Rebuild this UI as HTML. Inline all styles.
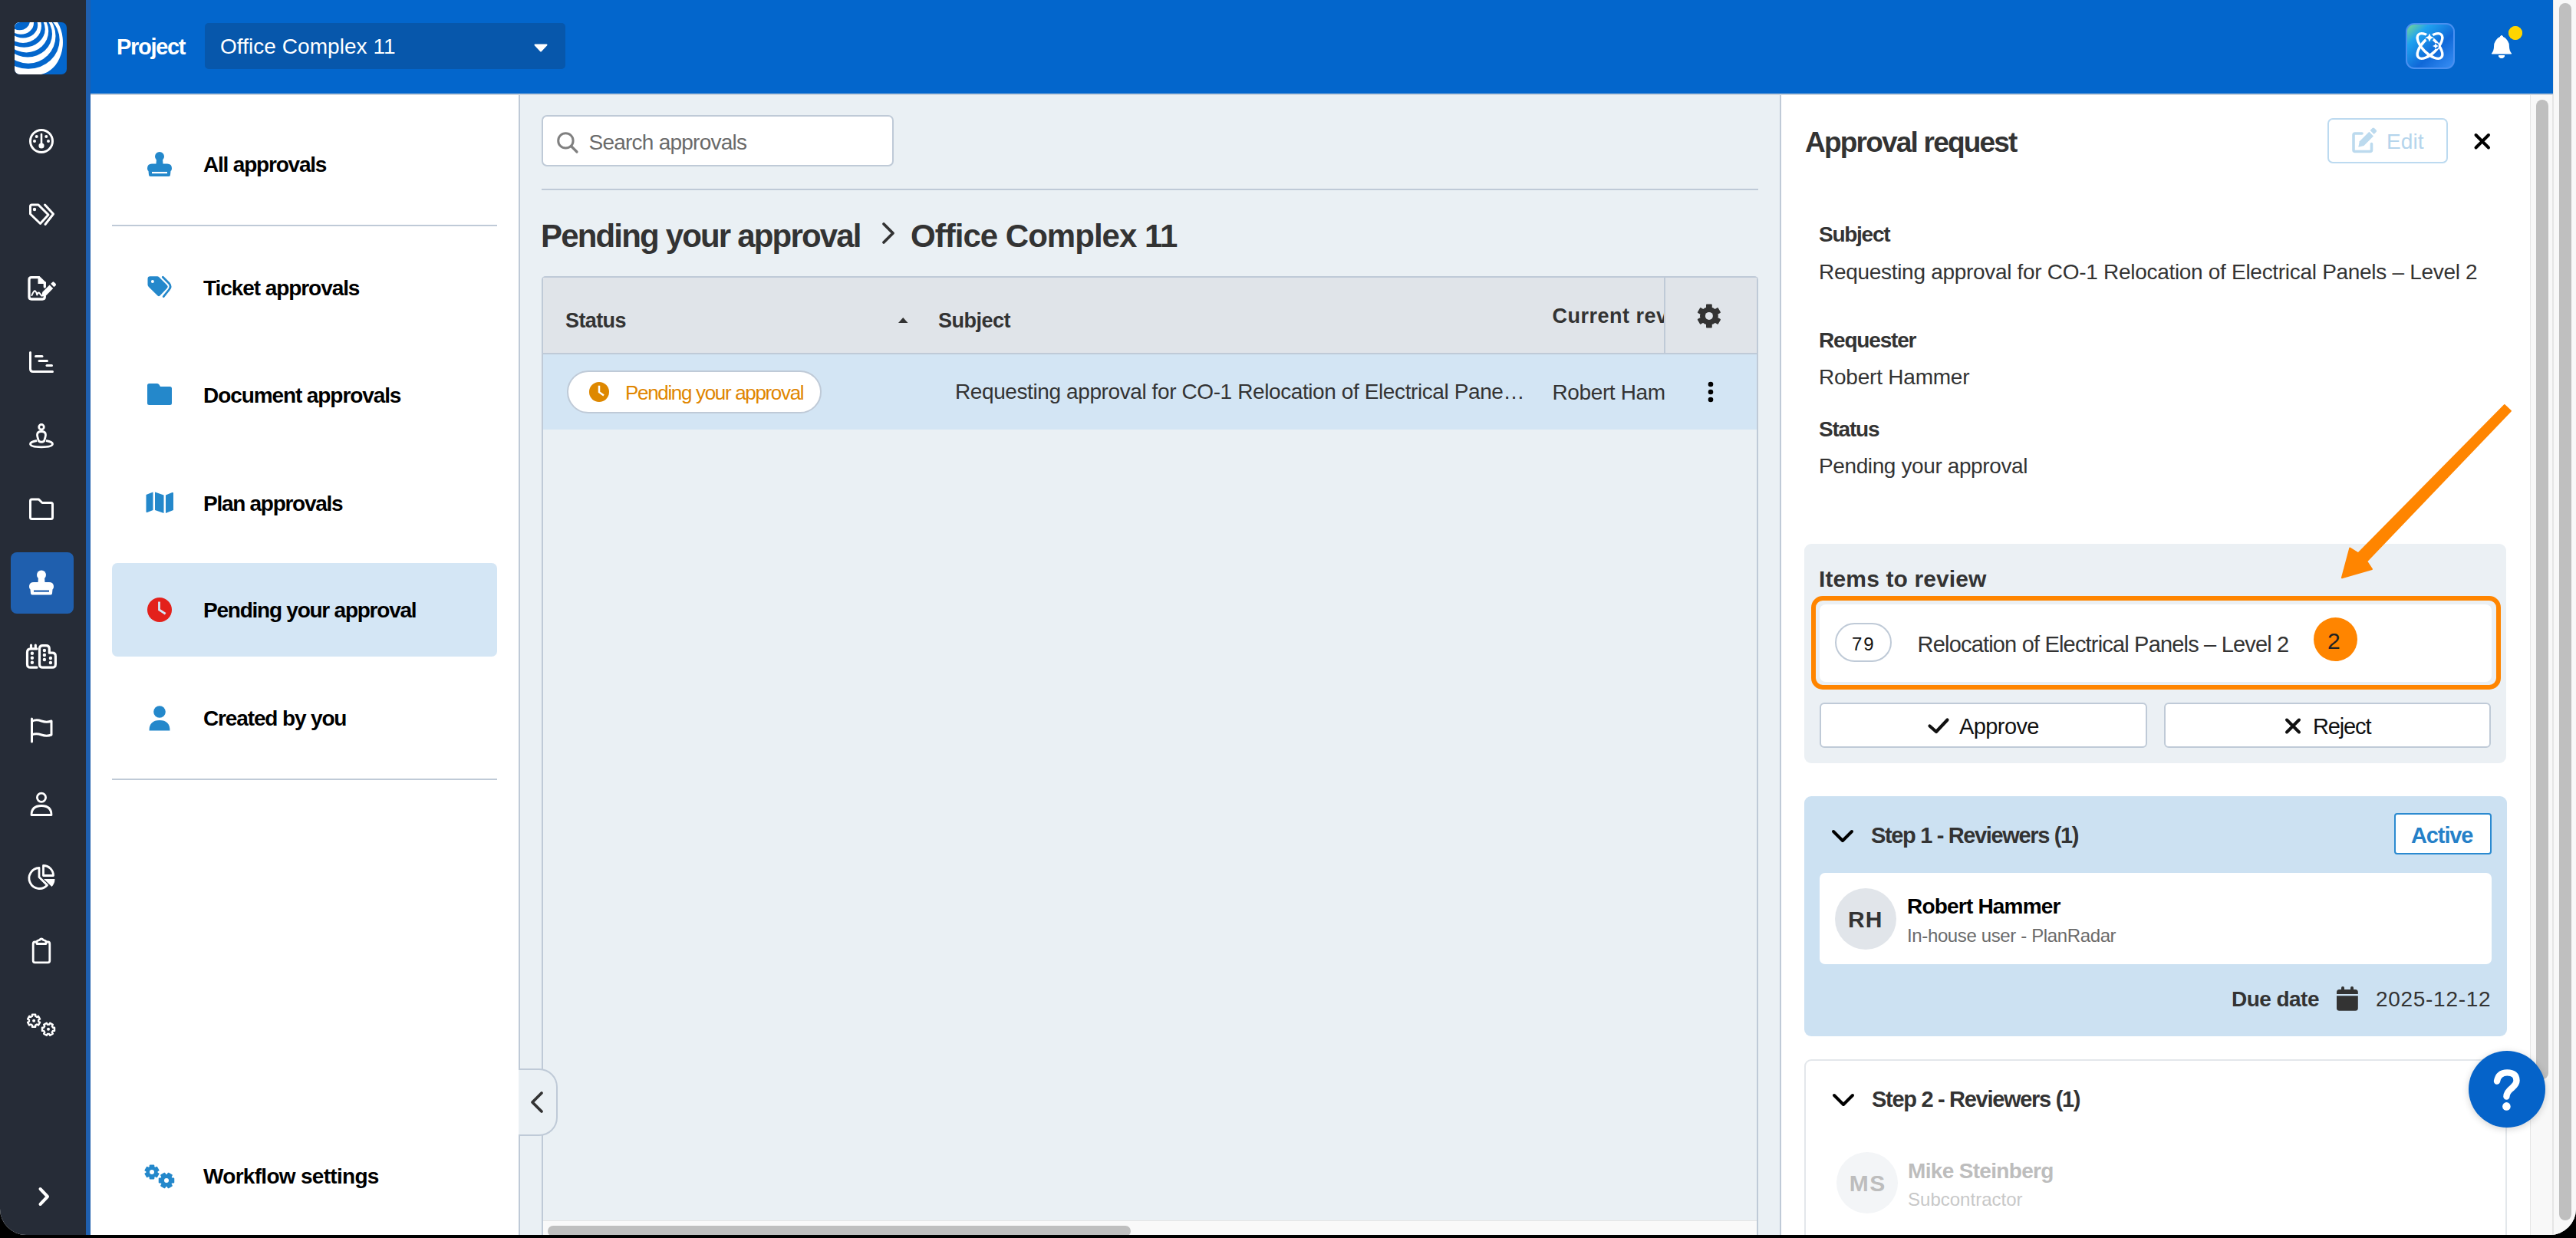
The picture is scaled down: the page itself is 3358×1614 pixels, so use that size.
<!DOCTYPE html>
<html><head><meta charset="utf-8"><title>Approvals</title>
<style>
html,body{margin:0;padding:0;width:3358px;height:1614px;overflow:hidden;background:#000;}
#app{position:absolute;left:0;top:0;width:3358px;height:1610px;overflow:hidden;background:#fff;border-bottom-left-radius:34px;border-bottom-right-radius:34px;font-family:'Liberation Sans',sans-serif;}
</style></head><body><div id="app">
<div style="position:absolute;left:0px;top:0px;width:112px;height:1610px;background:#262c37"></div>
<div style="position:absolute;left:112px;top:0px;width:6px;height:1610px;background:#1f5fae"></div>
<div style="position:absolute;left:14px;top:720px;width:82px;height:80px;background:#1f5fae;border-radius:8px"></div>
<div style="position:absolute;left:118px;top:0px;width:3210px;height:122px;background:#0366cc"></div>
<div style="position:absolute;left:118px;top:122px;width:3210px;height:2px;background:#c9d2dc"></div>
<div style="position:absolute;left:152.0px;top:46.5px;white-space:pre;font:700 29px/29px 'Liberation Sans',sans-serif;color:#fff;letter-spacing:-1.30px;">Project</div>
<div style="position:absolute;left:267px;top:30px;width:470px;height:60px;background:#0757ab;border-radius:5px"></div>
<div style="position:absolute;left:287.0px;top:47.3px;white-space:pre;font:400 28px/28px 'Liberation Sans',sans-serif;color:#fff;letter-spacing:0.05px;">Office Complex 11</div>
<svg style="position:absolute;left:696px;top:57px;" width="18" height="11" viewBox="0 0 18 11"><path d="M1.5 1.5 H16.5 L9 9.5 Z" fill="#fff" stroke="#fff" stroke-width="2" stroke-linejoin="round"/></svg>
<svg style="position:absolute;left:3136px;top:30px;" width="64" height="60" viewBox="0 0 64 60"><defs><linearGradient id="aig" x1="0" y1="0" x2="1" y2="1">
<stop offset="0" stop-color="#7fdc8a"/><stop offset="0.25" stop-color="#1fa3f0"/><stop offset="0.6" stop-color="#0f68d8"/><stop offset="1" stop-color="#3a90f5"/></linearGradient></defs>
<rect x="1" y="1" width="62" height="58" rx="10" fill="url(#aig)" stroke="#4a90f0" stroke-width="2"/></svg>
<svg style="position:absolute;left:3246px;top:44px;" width="30" height="34" viewBox="0 0 30 34"><path d="M15 2 C16 2 16.5 3 16.5 4 C21 5 23 9 23 14 L23 21 L27 26 L3 26 L7 21 L7 14 C7 9 9 5 13.5 4 C13.5 3 14 2 15 2 Z" fill="#fff"/><path d="M11 28 H19 C19 30.5 17 32 15 32 C13 32 11 30.5 11 28 Z" fill="#fff"/></svg>
<div style="position:absolute;left:3270px;top:34px;width:18px;height:18px;border-radius:50%;background:#ffd500"></div>
<div style="position:absolute;left:3328px;top:0px;width:30px;height:1610px;background:#f8f8f8;border-left:1px solid #e6e6e6;box-sizing:border-box"></div>
<div style="position:absolute;left:3336px;top:4px;width:16px;height:1587px;background:#bfbfbf;border-radius:8px"></div>
<div style="position:absolute;left:118px;top:124px;width:558px;height:1486px;background:#fff"></div>
<div style="position:absolute;left:676px;top:124px;width:2px;height:1486px;background:#bfcad7"></div>
<div style="position:absolute;left:146px;top:293px;width:502px;height:2px;background:#bfcad7"></div>
<div style="position:absolute;left:146px;top:734px;width:502px;height:122px;background:#d4e6f5;border-radius:7px"></div>
<div style="position:absolute;left:146px;top:1015px;width:502px;height:2px;background:#bfcad7"></div>
<div style="position:absolute;left:265.0px;top:201.3px;white-space:pre;font:700 28px/28px 'Liberation Sans',sans-serif;color:#000;letter-spacing:-1.20px;">All approvals</div>
<div style="position:absolute;left:265.0px;top:361.9px;white-space:pre;font:700 28px/28px 'Liberation Sans',sans-serif;color:#000;letter-spacing:-1.07px;">Ticket approvals</div>
<div style="position:absolute;left:265.0px;top:501.7px;white-space:pre;font:700 28px/28px 'Liberation Sans',sans-serif;color:#000;letter-spacing:-1.09px;">Document approvals</div>
<div style="position:absolute;left:265.0px;top:643.3px;white-space:pre;font:700 28px/28px 'Liberation Sans',sans-serif;color:#000;letter-spacing:-1.28px;">Plan approvals</div>
<div style="position:absolute;left:265.0px;top:782.3px;white-space:pre;font:700 28px/28px 'Liberation Sans',sans-serif;color:#000;letter-spacing:-1.24px;">Pending your approval</div>
<div style="position:absolute;left:265.0px;top:923.3px;white-space:pre;font:700 28px/28px 'Liberation Sans',sans-serif;color:#000;letter-spacing:-1.14px;">Created by you</div>
<div style="position:absolute;left:265.0px;top:1520.3px;white-space:pre;font:700 28px/28px 'Liberation Sans',sans-serif;color:#000;letter-spacing:-0.70px;">Workflow settings</div>
<div style="position:absolute;left:678px;top:124px;width:1642px;height:1486px;background:#eaf0f4"></div>
<div style="position:absolute;left:706px;top:150px;width:459px;height:67px;background:#fff;border:2px solid #bfcad7;border-radius:7px;box-sizing:border-box"></div>
<div style="position:absolute;left:767.5px;top:171.7px;white-space:pre;font:400 28px/28px 'Liberation Sans',sans-serif;color:#6a6a6a;letter-spacing:-0.76px;">Search approvals</div>
<div style="position:absolute;left:706px;top:246px;width:1586px;height:2px;background:#bfcad7"></div>
<div style="position:absolute;left:705.0px;top:286.5px;white-space:pre;font:700 42px/42px 'Liberation Sans',sans-serif;color:#333333;letter-spacing:-1.83px;">Pending your approval</div>
<div style="position:absolute;left:1187.0px;top:286.5px;white-space:pre;font:700 42px/42px 'Liberation Sans',sans-serif;color:#333333;letter-spacing:-0.98px;">Office Complex 11</div>
<div style="position:absolute;left:706px;top:360px;width:1586px;height:1250px;border:2px solid #bfcad7;border-bottom:none;border-radius:5px 5px 0 0;box-sizing:border-box;background:#eaf0f4"></div>
<div style="position:absolute;left:708px;top:362px;width:1582px;height:98px;background:#e0e4e9"></div>
<div style="position:absolute;left:708px;top:460px;width:1582px;height:2px;background:#bfcad7"></div>
<div style="position:absolute;left:2169px;top:362px;width:2px;height:98px;background:#bfcad7"></div>
<div style="position:absolute;left:708px;top:462px;width:1582px;height:98px;background:#d3e5f4"></div>
<div style="position:absolute;left:737.0px;top:405.2px;white-space:pre;font:700 27px/27px 'Liberation Sans',sans-serif;color:#333333;letter-spacing:-0.61px;">Status</div>
<div style="position:absolute;left:1223.0px;top:405.2px;white-space:pre;font:700 27px/27px 'Liberation Sans',sans-serif;color:#333333;letter-spacing:-0.51px;">Subject</div>
<div style="position:absolute;left:2023.5px;top:399.2px;white-space:pre;font:700 27px/27px 'Liberation Sans',sans-serif;color:#333333;letter-spacing:0.50px;width:145.5px;overflow:hidden;">Current rev</div>
<div style="position:absolute;left:739px;top:483px;width:332px;height:56px;background:#fff;border:2px solid #bfcad7;border-radius:28px;box-sizing:border-box"></div>
<div style="position:absolute;left:815.0px;top:499.0px;white-space:pre;font:400 26px/26px 'Liberation Sans',sans-serif;color:#e08600;letter-spacing:-1.33px;">Pending your approval</div>
<div style="position:absolute;left:1245.0px;top:497.3px;white-space:pre;font:400 28px/28px 'Liberation Sans',sans-serif;color:#333333;letter-spacing:-0.40px;">Requesting approval for CO-1 Relocation of Electrical Pane…</div>
<div style="position:absolute;left:2023.5px;top:498.3px;white-space:pre;font:400 28px/28px 'Liberation Sans',sans-serif;color:#333333;letter-spacing:-0.38px;">Robert Ham</div>
<div style="position:absolute;left:708px;top:1591px;width:1582px;height:19px;background:#f9f9f9;border-top:1px solid #e4e4e4;box-sizing:border-box"></div>
<div style="position:absolute;left:714px;top:1598px;width:760px;height:14px;background:#bfbfbf;border-radius:7px"></div>
<div style="position:absolute;left:676px;top:1393px;width:51px;height:88px;background:#eaf0f4;border:2px solid #bfcad7;border-left:none;border-radius:0 24px 24px 0;box-sizing:border-box"></div>
<div style="position:absolute;left:2320px;top:124px;width:978px;height:1486px;background:#fff"></div>
<div style="position:absolute;left:2320px;top:124px;width:2px;height:1486px;background:#bfcad7"></div>
<div style="position:absolute;left:3298px;top:124px;width:30px;height:1486px;background:#f8f8f8;border-left:1px solid #e6e6e6;border-right:1px solid #e6e6e6;box-sizing:border-box"></div>
<div style="position:absolute;left:3306px;top:130px;width:16px;height:1277px;background:#bfbfbf;border-radius:8px"></div>
<div style="position:absolute;left:2353.0px;top:167.2px;white-space:pre;font:700 37px/37px 'Liberation Sans',sans-serif;color:#333333;letter-spacing:-1.79px;">Approval request</div>
<div style="position:absolute;left:3034px;top:154px;width:157px;height:59px;border:2px solid #bcdaf0;border-radius:7px;box-sizing:border-box"></div>
<div style="position:absolute;left:3111.0px;top:171.3px;white-space:pre;font:400 28px/28px 'Liberation Sans',sans-serif;color:#b5d5ec;letter-spacing:0.08px;">Edit</div>
<div style="position:absolute;left:2371.0px;top:292.3px;white-space:pre;font:700 28px/28px 'Liberation Sans',sans-serif;color:#333333;letter-spacing:-1.27px;">Subject</div>
<div style="position:absolute;left:2371.0px;top:341.3px;white-space:pre;font:400 28px/28px 'Liberation Sans',sans-serif;color:#333333;letter-spacing:-0.30px;">Requesting approval for CO-1 Relocation of Electrical Panels – Level 2</div>
<div style="position:absolute;left:2371.0px;top:429.9px;white-space:pre;font:700 28px/28px 'Liberation Sans',sans-serif;color:#333333;letter-spacing:-1.18px;">Requester</div>
<div style="position:absolute;left:2371.0px;top:478.3px;white-space:pre;font:400 28px/28px 'Liberation Sans',sans-serif;color:#333333;letter-spacing:-0.22px;">Robert Hammer</div>
<div style="position:absolute;left:2371.0px;top:546.3px;white-space:pre;font:700 28px/28px 'Liberation Sans',sans-serif;color:#333333;letter-spacing:-1.22px;">Status</div>
<div style="position:absolute;left:2371.0px;top:594.3px;white-space:pre;font:400 28px/28px 'Liberation Sans',sans-serif;color:#333333;letter-spacing:-0.39px;">Pending your approval</div>
<div style="position:absolute;left:2352px;top:709px;width:915px;height:286px;background:#ebf0f4;border-radius:9px"></div>
<div style="position:absolute;left:2371.0px;top:739.6px;white-space:pre;font:700 30px/30px 'Liberation Sans',sans-serif;color:#333333;letter-spacing:0.12px;">Items to review</div>
<div style="position:absolute;left:2372px;top:787.5px;width:876px;height:101.0px;background:#fff;border-radius:8px"></div>
<div style="position:absolute;left:2360.5px;top:777px;width:899px;height:122px;border:6px solid #ff8500;border-radius:15px;box-sizing:border-box"></div>
<div style="position:absolute;left:2392px;top:812px;width:74px;height:51px;border:2px solid #bfcad7;border-radius:26px;box-sizing:border-box"></div>
<div style="position:absolute;left:2414.0px;top:827.7px;white-space:pre;font:400 24px/24px 'Liberation Sans',sans-serif;color:#111;letter-spacing:1.80px;">79</div>
<div style="position:absolute;left:2499.6px;top:825.5px;white-space:pre;font:400 29px/29px 'Liberation Sans',sans-serif;color:#333333;letter-spacing:-0.82px;">Relocation of Electrical Panels – Level 2</div>
<div style="position:absolute;left:3016px;top:805px;width:57px;height:57px;border-radius:50%;background:#ff8500"></div>
<div style="position:absolute;left:3034.0px;top:820.6px;white-space:pre;font:400 30px/30px 'Liberation Sans',sans-serif;color:#222;letter-spacing:0.00px;">2</div>
<div style="position:absolute;left:2372px;top:916px;width:427px;height:59px;background:#fff;border:2px solid #bfcad7;border-radius:6px;box-sizing:border-box"></div>
<div style="position:absolute;left:2821px;top:916px;width:426px;height:59px;background:#fff;border:2px solid #bfcad7;border-radius:6px;box-sizing:border-box"></div>
<div style="position:absolute;left:2554.0px;top:932.5px;white-space:pre;font:400 29px/29px 'Liberation Sans',sans-serif;color:#111;letter-spacing:-0.59px;">Approve</div>
<div style="position:absolute;left:3015.0px;top:932.5px;white-space:pre;font:400 29px/29px 'Liberation Sans',sans-serif;color:#111;letter-spacing:-1.14px;">Reject</div>
<svg style="position:absolute;left:0;top:0" width="3358" height="1614"><path d="M3264.7 528.1 L3272.9 535.7 L3085.2 731.7 L3092 742 L3052.9 753.3 L3063.3 714.6 L3074.2 721.3 Z" fill="#ff8500" stroke="#ff8500" stroke-width="2" stroke-linejoin="round"/></svg>
<div style="position:absolute;left:2352px;top:1038px;width:916px;height:313px;background:#cce1f2;border-radius:9px"></div>
<div style="position:absolute;left:2439.0px;top:1074.5px;white-space:pre;font:700 29px/29px 'Liberation Sans',sans-serif;color:#333333;letter-spacing:-1.35px;">Step 1 - Reviewers (1)</div>
<div style="position:absolute;left:3121px;top:1060px;width:127px;height:54px;background:#fff;border:2px solid #2b8ad0;border-radius:4px;box-sizing:border-box"></div>
<div style="position:absolute;left:3143.0px;top:1074.5px;white-space:pre;font:700 29px/29px 'Liberation Sans',sans-serif;color:#2580c8;letter-spacing:-1.11px;">Active</div>
<div style="position:absolute;left:2372px;top:1138px;width:876px;height:119px;background:#fff;border-radius:7px"></div>
<div style="position:absolute;left:2392px;top:1158px;width:80px;height:80px;border-radius:50%;background:#e1e5ea"></div>
<div style="position:absolute;left:2409.0px;top:1184.2px;white-space:pre;font:700 30px/30px 'Liberation Sans',sans-serif;color:#333333;letter-spacing:1.16px;">RH</div>
<div style="position:absolute;left:2486.0px;top:1168.3px;white-space:pre;font:700 28px/28px 'Liberation Sans',sans-serif;color:#000;letter-spacing:-0.80px;">Robert Hammer</div>
<div style="position:absolute;left:2486.0px;top:1207.7px;white-space:pre;font:400 24px/24px 'Liberation Sans',sans-serif;color:#6b6b6b;letter-spacing:-0.37px;">In-house user - PlanRadar</div>
<div style="position:absolute;left:2909.0px;top:1289.3px;white-space:pre;font:700 28px/28px 'Liberation Sans',sans-serif;color:#333333;letter-spacing:-0.54px;">Due date</div>
<div style="position:absolute;left:3097.0px;top:1289.3px;white-space:pre;font:400 28px/28px 'Liberation Sans',sans-serif;color:#333333;letter-spacing:0.70px;">2025-12-12</div>
<div style="position:absolute;left:2352px;top:1381px;width:916px;height:300px;border:2px solid #e3e7eb;border-radius:9px;box-sizing:border-box;background:#fff"></div>
<div style="position:absolute;left:2440.0px;top:1418.5px;white-space:pre;font:700 29px/29px 'Liberation Sans',sans-serif;color:#333333;letter-spacing:-1.30px;">Step 2 - Reviewers (1)</div>
<div style="position:absolute;left:2394px;top:1502px;width:80px;height:80px;border-radius:50%;background:#f3f5f7"></div>
<div style="position:absolute;left:2410.7px;top:1528.2px;white-space:pre;font:700 30px/30px 'Liberation Sans',sans-serif;color:#bdbdbd;letter-spacing:1.50px;">MS</div>
<div style="position:absolute;left:2487.0px;top:1513.3px;white-space:pre;font:700 28px/28px 'Liberation Sans',sans-serif;color:#bdbdbd;letter-spacing:-0.67px;">Mike Steinberg</div>
<div style="position:absolute;left:2487.0px;top:1551.7px;white-space:pre;font:400 24px/24px 'Liberation Sans',sans-serif;color:#c8c8c8;letter-spacing:0.01px;">Subcontractor</div>
<div style="position:absolute;left:3218px;top:1370px;width:100px;height:100px;border-radius:50%;background:#0563c9;box-shadow:0 2px 10px rgba(0,0,0,0.18)"></div>
<svg style="position:absolute;left:0;top:0" width="3358" height="1614" viewBox="0 0 3358 1614"><defs><clipPath id="lgc"><rect x="19" y="29" width="68" height="68" rx="7"/></clipPath></defs>
<g clip-path="url(#lgc)"><rect x="19" y="29" width="68" height="68" fill="#0366cc"/>
<g transform="translate(19,29)">
<path d="M56 0 A33.4 42.5 0 0 1 34.5 68 L-2 68 L-2 -2 L56 -2 Z" fill="#fff"/>
<ellipse cx="17.9" cy="23.1" rx="40.8" ry="37.7" fill="#0366cc"/>
<ellipse cx="17.9" cy="17.9" rx="35.6" ry="35.9" fill="#fff"/>
<ellipse cx="17" cy="15.4" rx="32" ry="30.1" fill="#0366cc"/>
<ellipse cx="15.4" cy="11.5" rx="28.8" ry="28" fill="#fff"/>
<ellipse cx="12.4" cy="9" rx="27.4" ry="23.7" fill="#0366cc"/>
<ellipse cx="11" cy="5" rx="24" ry="21.9" fill="#fff"/>
<ellipse cx="11" cy="4" rx="19.2" ry="16.6" fill="#0366cc"/>
<ellipse cx="8" cy="1" rx="17" ry="14.8" fill="#fff"/>
<ellipse cx="6.6" cy="-2" rx="13.4" ry="12.2" fill="#0366cc"/>
</g></g>
<g fill="none" stroke="#ffffff" stroke-width="3"><circle cx="54" cy="184" r="14.5"/></g>
<line x1="54" y1="175" x2="54" y2="189" stroke="#ffffff" stroke-width="2.6" stroke-linecap="round"/>
<circle cx="54" cy="190" r="3.6" fill="#ffffff"/>
<circle cx="47.7" cy="178" r="2" fill="#ffffff"/><circle cx="60.3" cy="178" r="2" fill="#ffffff"/>
<circle cx="45" cy="184" r="2" fill="#ffffff"/><circle cx="63" cy="184" r="2" fill="#ffffff"/>
<g fill="none" stroke="#ffffff" stroke-width="3" stroke-linejoin="round" stroke-linecap="round">
<path d="M39.5 269 Q39.5 267 41.5 267 L50 267 L63 280 L52.5 291.5 L39.5 279 Z"/>
<path d="M58.5 267 L69.5 279 L59 292.5"/></g>
<circle cx="45" cy="273" r="2.2" fill="#ffffff"/>
<g fill="none" stroke="#ffffff" stroke-width="3.3" stroke-linejoin="round" stroke-linecap="round">
<path d="M58.3 374 L58.3 368.6 M50.2 361.7 L41 361.7 Q38 361.7 38 364.7 L38 387 Q38 390 41 390 L55.3 390 Q58.3 390 58.3 387 L58.3 386"/></g>
<path d="M49.5 360 L51.5 360 L60 368.3 L60 370 L49.5 370 Z" fill="#ffffff"/>
<path d="M41.5 385 Q44 378.5 46 379.5 Q47.5 380.5 48.3 384.5 Q49.5 381 50.8 381.5 Q52 382.5 54 385.5" fill="none" stroke="#ffffff" stroke-width="2" stroke-linecap="round" stroke-linejoin="round"/>
<path d="M54.2 386.8 L55.3 380.8 L64.6 371.5 L69.2 376.1 L59.9 385.4 Z" fill="#ffffff"/>
<path d="M66.1 370 L68.2 367.9 Q69.4 366.7 70.6 367.9 L72.5 369.8 Q73.7 371 72.5 372.2 L70.4 374.3 Z" fill="#ffffff"/>
<g fill="none" stroke="#ffffff" stroke-width="3" stroke-linecap="round" stroke-linejoin="round">
<path d="M39.5 459.5 L39.5 481 Q39.5 484.5 43 484.5 L68.5 484.5"/>
<path d="M46.5 464.5 L55 464.5"/><path d="M51 470.5 L61.5 470.5"/><path d="M61 476.5 L67.5 476.5"/></g>
<g fill="none" stroke="#ffffff" stroke-width="2.8" stroke-linejoin="round">
<circle cx="54" cy="556.7" r="3.3"/>
<path d="M50.5 575 Q48.5 569 48.5 567 Q48.5 562.5 54 562.5 Q59.5 562.5 59.5 567 Q59.5 569 57.5 575 Q54 577.5 50.5 575 Z"/>
<path d="M48 574.5 Q39.5 576 39.5 578.8 Q39.5 582.8 54 582.8 Q68.5 582.8 68.5 578.8 Q68.5 576 60 574.5"/></g>
<path d="M39.5 653 Q39.5 651 41.5 651 L50.5 651 L55 655.5 L66.5 655.5 Q68.5 655.5 68.5 657.5 L68.5 674.5 Q68.5 676.5 66.5 676.5 L41.5 676.5 Q39.5 676.5 39.5 674.5 Z" fill="none" stroke="#ffffff" stroke-width="3" stroke-linejoin="round"/>
<circle cx="54" cy="749.5" r="6" fill="#ffffff"/>
<path d="M50 752.5 L58 752.5 L58.5 759.5 L49.5 759.5 Z" fill="#ffffff"/>
<path d="M44 759.0 L64 759.0 Q70 759.0 70 765.0 Q70 767.5 68.5 768.5 L68 773.5 Q68 775.5 66 775.5 L42 775.5 Q40 775.5 40 773.5 L39.5 768.5 Q38 767.5 38 765.0 Q38 759.0 44 759.0 Z" fill="#ffffff"/>
<rect x="44" y="769.5" width="20" height="2.2" fill="#1f5fae"/>
<g fill="none" stroke="#ffffff" stroke-width="3.2" stroke-linejoin="round" stroke-linecap="round">
<path d="M48 845.9 L40 845.9 Q35.5 845.9 35.5 850.4 L35.5 866 Q35.5 870.2 39.7 870.2 L48 870.2"/>
<path d="M40.5 845.5 L40.5 841"/><path d="M46.3 845.5 L46.3 841"/>
<path d="M51.5 866 L51.5 845.8 Q51.5 841.6 55.7 841.6 L60.1 841.6 Q64.3 841.6 64.3 845.8 L64.3 851.2 L68.2 851.2 Q72.4 851.2 72.4 855.4 L72.4 866 Q72.4 870.2 68.2 870.2 L55.7 870.2 Q51.5 870.2 51.5 866 Z"/></g>
<g fill="#ffffff"><circle cx="41.9" cy="851.8" r="2.2"/><circle cx="41.9" cy="857.8" r="2.2"/><circle cx="41.9" cy="863.8" r="2.2"/>
<circle cx="57.9" cy="848" r="2.2"/><circle cx="57.9" cy="854" r="2.2"/><circle cx="57.9" cy="860" r="2.2"/>
<circle cx="65.9" cy="858" r="2.2"/><circle cx="65.9" cy="864" r="2.2"/></g>
<g fill="none" stroke="#ffffff" stroke-width="3" stroke-linecap="round" stroke-linejoin="round">
<path d="M41.5 937 L41.5 967"/>
<path d="M41.5 940.5 Q47 937.5 54 940 Q61 942.5 67 940 L67 958 Q61 960.5 54 958 Q47 955.5 41.5 958"/></g>
<g fill="none" stroke="#ffffff" stroke-width="2.8" stroke-linejoin="round">
<circle cx="54" cy="1039.8" r="5.6"/>
<path d="M41 1062.5 Q41 1050.5 54 1050.5 Q67 1050.5 67 1062.5 Z"/></g>
<g fill="none" stroke="#ffffff" stroke-width="2.8" stroke-linejoin="round">
<path d="M51 1131.5 A13.5 13.5 0 1 0 61.5 1154 L51 1143.5 Z"/>
<path d="M56.5 1128.5 L56.5 1141.5 L69.5 1141.5 A13 13 0 0 0 56.5 1128.5 Z"/></g>
<path d="M57 1146 L71.5 1146 A14.5 14.5 0 0 1 67.5 1156 Z" fill="#ffffff"/>
<g fill="none" stroke="#ffffff" stroke-width="2.8" stroke-linejoin="round">
<path d="M48 1228 L45.5 1228 Q43.2 1228 43.2 1230.5 L43.2 1252.5 Q43.2 1254.8 45.5 1254.8 L62.5 1254.8 Q64.8 1254.8 64.8 1252.5 L64.8 1230.5 Q64.8 1228 62.5 1228 L60 1228"/>
<path d="M48 1230.5 L48 1228 Q48 1226.5 50 1226 L51.5 1225.5 Q54 1222.5 56.5 1225.5 L58 1226 Q60 1226.5 60 1228 L60 1230.5 Z"/></g>
<g fill="none" stroke="#ffffff" stroke-width="2.4" stroke-linejoin="round">
<path d="M42.00 1324.87 L42.00 1322.67 L46.20 1322.67 L46.20 1324.87 A6.2 6.2 0 0 1 48.10 1325.96 L50.00 1324.87 L52.10 1328.50 L50.20 1329.60 A6.2 6.2 0 0 1 50.20 1331.80 L52.10 1332.90 L50.00 1336.53 L48.10 1335.44 A6.2 6.2 0 0 1 46.20 1336.53 L46.20 1338.73 L42.00 1338.73 L42.00 1336.53 A6.2 6.2 0 0 1 40.10 1335.44 L38.20 1336.53 L36.10 1332.90 L38.00 1331.80 A6.2 6.2 0 0 1 38.00 1329.60 L36.10 1328.50 L38.20 1324.87 L40.10 1325.96 A6.2 6.2 0 0 1 42.00 1324.87 Z"/>
<path d="M68.83 1339.70 L71.03 1339.70 L71.03 1343.90 L68.83 1343.90 A6.2 6.2 0 0 1 67.74 1345.80 L68.83 1347.70 L65.20 1349.80 L64.10 1347.90 A6.2 6.2 0 0 1 61.90 1347.90 L60.80 1349.80 L57.17 1347.70 L58.26 1345.80 A6.2 6.2 0 0 1 57.17 1343.90 L54.97 1343.90 L54.97 1339.70 L57.17 1339.70 A6.2 6.2 0 0 1 58.26 1337.80 L57.17 1335.90 L60.80 1333.80 L61.90 1335.70 A6.2 6.2 0 0 1 64.10 1335.70 L65.20 1333.80 L68.83 1335.90 L67.74 1337.80 A6.2 6.2 0 0 1 68.83 1339.70 Z"/></g>
<circle cx="44.1" cy="1330.7" r="2" fill="#ffffff"/><circle cx="63" cy="1341.8" r="2" fill="#ffffff"/>
<path d="M52.5 1550 L62 1560 L52.5 1570" fill="none" stroke="#ffffff" stroke-width="4" stroke-linecap="round" stroke-linejoin="round"/>
<g transform="translate(3167.5,60)">
<g fill="none" stroke="#fff" stroke-width="3.4">
<ellipse cx="0" cy="0" rx="21" ry="9.5" transform="rotate(45)"/>
<ellipse cx="0" cy="0" rx="21" ry="9.5" transform="rotate(-45)"/>
</g>
<circle cx="-0.5" cy="-11" r="5.5" fill="#1a90ea"/><path d="M-0.5 -16.5 L1.2 -12.7 L5 -11 L1.2 -9.3 L-0.5 -5.5 L-2.2 -9.3 L-6 -11 L-2.2 -12.7 Z" fill="#fff"/>
<circle cx="7.5" cy="0" r="4" fill="#1676e0"/><path d="M7.5 -4 L8.7 -1.2 L11.5 0 L8.7 1.2 L7.5 4 L6.3 1.2 L3.5 0 L6.3 -1.2 Z" fill="#fff"/>
</g>
<path d="M3261 46.5 Q3263.3 46.5 3263.5 49.8 Q3271 51.5 3271 61 Q3271 66 3274 69.5 Q3274.5 70.5 3273.3 70.5 L3248.7 70.5 Q3247.5 70.5 3248 69.5 Q3251 66 3251 61 Q3251 51.5 3258.5 49.8 Q3258.7 46.5 3261 46.5 Z" fill="#fff"/>
<path d="M3257 72 L3265 72 Q3265 75.8 3261 75.8 Q3257 75.8 3257 72 Z" fill="#fff"/>
<circle cx="3279" cy="43" r="9" fill="#ffd500"/>
<circle cx="208" cy="204" r="6" fill="#2488cb"/>
<path d="M204 207 L212 207 L212.5 214 L203.5 214 Z" fill="#2488cb"/>
<path d="M198 213.5 L218 213.5 Q224 213.5 224 219.5 Q224 222 222.5 223 L222 228 Q222 230 220 230 L196 230 Q194 230 194 228 L193.5 223 Q192 222 192 219.5 Q192 213.5 198 213.5 Z" fill="#2488cb"/>
<rect x="198" y="224" width="20" height="2.2" fill="#ffffff"/>
<path d="M192.5 363.5 Q192.5 360.3 195.7 360.3 L205 360.3 Q206.3 360.3 207.3 361.3 L218 372 Q219.5 373.8 218 375.6 L208.5 385.5 Q207 387 205.5 385.5 L193.8 374 Q192.5 372.7 192.5 371 Z" fill="#2488cb"/>
<circle cx="198.9" cy="366.9" r="2" fill="#fff"/>
<path d="M212.3 361.3 L220.5 369.5 Q223.6 373.5 220.5 377.5 L213.2 386.6" fill="none" stroke="#2488cb" stroke-width="2.8" stroke-linecap="round" stroke-linejoin="round"/>
<path d="M192 502.5 Q192 500 194.5 500 L205 500 Q206.5 500 207.5 501.5 L209 504 L221.5 504 Q224 504 224 506.5 L224 525.5 Q224 528 221.5 528 L194.5 528 Q192 528 192 525.5 Z" fill="#2488cb"/>
<path d="M190.5 645 L199.5 641.5 L199.5 665 L192 668 Q190.5 668.5 190.5 667 Z" fill="#2488cb"/>
<path d="M202 641.5 L213.5 645.5 L213.5 669 L202 665 Z" fill="#2488cb"/>
<path d="M216 645.5 L224.5 642 Q226 641.5 226 643 L226 665 L216 669 Z" fill="#2488cb"/>
<circle cx="208" cy="795" r="16" fill="#e3211b"/>
<path d="M207.5 786 L207.5 795 L214.5 799.5" fill="none" stroke="#d4e6f5" stroke-width="2.8" stroke-linecap="square"/>
<circle cx="208" cy="928" r="7.8" fill="#2488cb"/>
<path d="M194.5 952.5 Q194.5 939 208 939 Q221.5 939 221.5 952.5 Z" fill="#2488cb"/>
<path d="M195.70 1521.81 L195.70 1519.51 L200.30 1519.51 L200.30 1521.81 A6.6 6.6 0 0 1 202.21 1522.92 L204.21 1521.76 L206.51 1525.74 L204.51 1526.90 A6.6 6.6 0 0 1 204.51 1529.10 L206.51 1530.26 L204.21 1534.24 L202.21 1533.08 A6.6 6.6 0 0 1 200.30 1534.19 L200.30 1536.49 L195.70 1536.49 L195.70 1534.19 A6.6 6.6 0 0 1 193.79 1533.08 L191.79 1534.24 L189.49 1530.26 L191.49 1529.10 A6.6 6.6 0 0 1 191.49 1526.90 L189.49 1525.74 L191.79 1521.76 L193.79 1522.92 A6.6 6.6 0 0 1 195.70 1521.81 Z" fill="#2488cb" stroke="#2488cb" stroke-width="2" stroke-linejoin="round"/><circle cx="198" cy="1528" r="3" fill="#fff"/>
<path d="M223.65 1536.50 L226.27 1536.50 L226.27 1541.50 L223.65 1541.50 A7.1 7.1 0 0 1 222.49 1543.50 L223.80 1545.78 L219.47 1548.28 L218.16 1546.00 A7.1 7.1 0 0 1 215.84 1546.00 L214.53 1548.28 L210.20 1545.78 L211.51 1543.50 A7.1 7.1 0 0 1 210.35 1541.50 L207.73 1541.50 L207.73 1536.50 L210.35 1536.50 A7.1 7.1 0 0 1 211.51 1534.50 L210.20 1532.22 L214.53 1529.72 L215.84 1532.00 A7.1 7.1 0 0 1 218.16 1532.00 L219.47 1529.72 L223.80 1532.22 L222.49 1534.50 A7.1 7.1 0 0 1 223.65 1536.50 Z" fill="#2488cb" stroke="#2488cb" stroke-width="2" stroke-linejoin="round"/><circle cx="217" cy="1539" r="3" fill="#fff"/>
<circle cx="737.4" cy="183.4" r="9.7" fill="none" stroke="#808080" stroke-width="3"/><path d="M744.5 190.5 L752 198" stroke="#808080" stroke-width="3.2" stroke-linecap="round"/>
<path d="M1152 292 L1164 304 L1152 316" fill="none" stroke="#333333" stroke-width="3.8" stroke-linecap="round" stroke-linejoin="round"/>
<path d="M1171 421 L1183.5 421 L1177.25 414 Z" fill="#333333"/>
<path d="M2225.00 401.39 L2225.00 397.39 L2230.80 397.39 L2230.80 401.39 A10.9 10.9 0 0 1 2235.55 404.13 L2239.02 402.13 L2241.92 407.15 L2238.45 409.16 A10.9 10.9 0 0 1 2238.45 414.64 L2241.92 416.65 L2239.02 421.67 L2235.55 419.67 A10.9 10.9 0 0 1 2230.80 422.41 L2230.80 426.41 L2225.00 426.41 L2225.00 422.41 A10.9 10.9 0 0 1 2220.25 419.67 L2216.78 421.67 L2213.88 416.65 L2217.35 414.64 A10.9 10.9 0 0 1 2217.35 409.16 L2213.88 407.15 L2216.78 402.13 L2220.25 404.13 A10.9 10.9 0 0 1 2225.00 401.39 Z" fill="#333333" stroke="#333333" stroke-width="2" stroke-linejoin="round"/><circle cx="2227.9" cy="411.9" r="5" fill="#e0e4e9"/>
<circle cx="2230" cy="501" r="3.3" fill="#000"/><circle cx="2230" cy="511" r="3.3" fill="#000"/><circle cx="2230" cy="521" r="3.3" fill="#000"/>
<circle cx="781" cy="511" r="13" fill="#de8800"/><path d="M781 504 L781 511.2 L786 514.7" fill="none" stroke="#fff" stroke-width="2.5" stroke-linecap="square"/>
<path d="M706 1425 L694 1437 L706 1449" fill="none" stroke="#333333" stroke-width="3.8" stroke-linecap="round" stroke-linejoin="round"/>
<g fill="none" stroke="#bcdaee" stroke-width="3.6" stroke-linecap="round" stroke-linejoin="round">
<path d="M3079 174 L3070 174 Q3068 174 3068 176 L3068 195.5 Q3068 197.5 3070 197.5 L3089.5 197.5 Q3091.5 197.5 3091.5 195.5 L3091.5 187.5"/></g>
<path d="M3074.3 191.7 L3075.8 184.2 L3088.3 171.7 L3094 177.4 L3081.5 189.9 Z" fill="#bcdaee"/>
<path d="M3089.6 170 L3092.6 167 Q3093.8 165.8 3095 167 L3097.6 169.6 Q3098.8 170.8 3097.6 172 L3094.6 175 Z" fill="#bcdaee"/>
<path d="M3227.5 176 L3244 192.5 M3244 176 L3227.5 192.5" stroke="#000" stroke-width="4" stroke-linecap="round"/>
<path d="M2515.5 946.5 L2524 954 L2538.5 938.5" fill="none" stroke="#111" stroke-width="4.2" stroke-linecap="round" stroke-linejoin="round"/>
<path d="M2981 938.5 L2997 954.5 M2997 938.5 L2981 954.5" stroke="#111" stroke-width="4" stroke-linecap="round"/>
<path d="M2390 1084 L2402 1096 L2414 1084" fill="none" stroke="#000" stroke-width="4" stroke-linecap="round" stroke-linejoin="round"/>
<path d="M2391 1428 L2403 1440 L2415 1428" fill="none" stroke="#000" stroke-width="4" stroke-linecap="round" stroke-linejoin="round"/>
<path d="M3046 1293.5 Q3046 1290 3049.5 1290 L3070.3 1290 Q3073.8 1290 3073.8 1293.5 L3073.8 1296 L3046 1296 Z" fill="#333333"/>
<path d="M3046 1298.2 L3073.8 1298.2 L3073.8 1314.3 Q3073.8 1317.8 3070.3 1317.8 L3049.5 1317.8 Q3046 1317.8 3046 1314.3 Z" fill="#333333"/>
<path d="M3054 1291 L3054 1288" stroke="#333333" stroke-width="4" stroke-linecap="round"/><path d="M3066 1291 L3066 1288" stroke="#333333" stroke-width="4" stroke-linecap="round"/>
<path d="M3255 1409.5 Q3257 1398.4 3268.3 1398.4 Q3280.5 1398.4 3280.5 1408.8 Q3280.5 1413 3275 1418 Q3267.4 1424 3267.4 1429.5" fill="none" stroke="#fff" stroke-width="8.4" stroke-linecap="round"/><circle cx="3267.4" cy="1442.4" r="5.3" fill="#fff"/></svg>
</div></body></html>
